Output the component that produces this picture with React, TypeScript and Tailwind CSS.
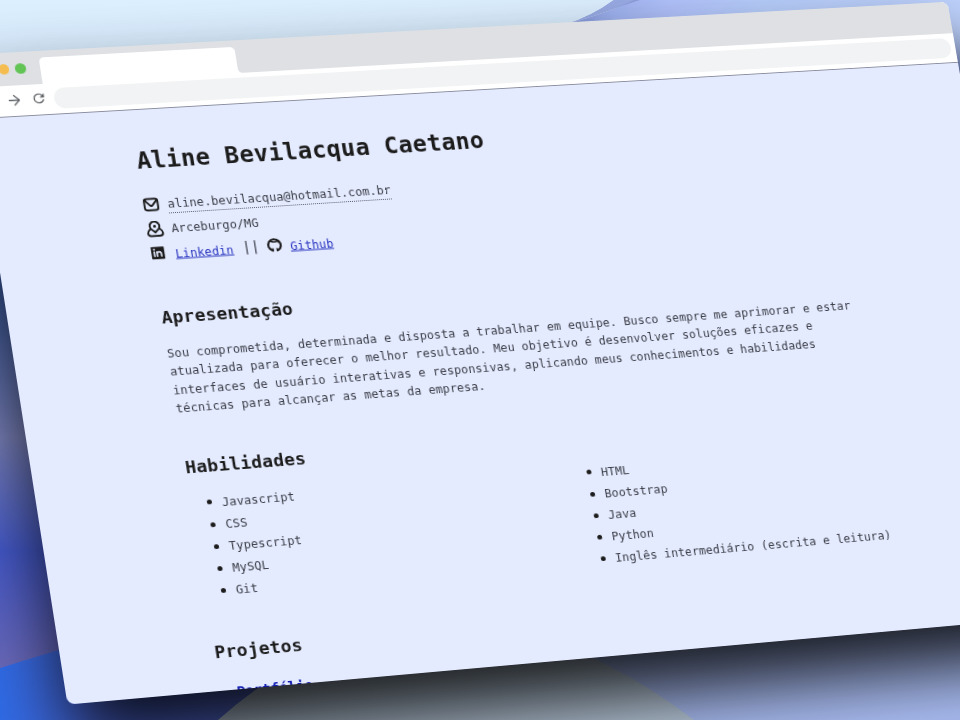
import React from "react";
import { ArrowRight } from "lucide-react";

const W = 1024;
const H = 680;
// Corners of the tilted window on the stage: TL, TR, BR, BL
const Q = [[-34, 54.8], [947.5, 1.8], [1053, 616.7], [67.5, 704.6]];

function perspective() {
  const [[x0, y0], [x1, y1], [x2, y2], [x3, y3]] = Q;
  const sx = x0 - x1 + x2 - x3;
  const sy = y0 - y1 + y2 - y3;
  const dx1 = x1 - x2, dx2 = x3 - x2, dy1 = y1 - y2, dy2 = y3 - y2;
  const det = dx1 * dy2 - dx2 * dy1;
  const g = (sx * dy2 - dx2 * sy) / det;
  const h = (dx1 * sy - sx * dy1) / det;
  const a = x1 - x0 + g * x1, b = x3 - x0 + h * x3;
  const d = y1 - y0 + g * y1, e = y3 - y0 + h * y3;
  const m = [a / W, d / W, 0, g / W, b / H, e / H, 0, h / H, 0, 0, 1, 0, x0, y0, 0, 1];
  return `matrix3d(${m.join(",")})`;
}

function Backdrop() {
  return (
    <svg className="absolute inset-0" width="960" height="720" viewBox="0 0 960 720">
      <defs>
        <linearGradient id="sky" x1="0" x2="0" y1="0" y2="1"><stop offset="0" stopColor="#dcefff" /><stop offset=".45" stopColor="#d5e8f9" /><stop offset="1" stopColor="#c8dcf2" /></linearGradient>
        <linearGradient id="right" x1="0" x2="1"><stop offset="0" stopColor="#7f92d4" /><stop offset=".12" stopColor="#9fb2ef" /><stop offset=".26" stopColor="#b0c1fb" /><stop offset=".5" stopColor="#b8cffd" /><stop offset="1" stopColor="#c0d4ff" /></linearGradient>
        <linearGradient id="edge" x1="0" x2="0" y1="0" y2="1"><stop offset="0" stopColor="#c0d4ff" stopOpacity="0" /><stop offset="1" stopColor="#4a60b0" /></linearGradient>
        <linearGradient id="left" x1="0" y1="0" x2="0" y2="1"><stop offset="0" stopColor="#3b5fb0" /><stop offset=".3" stopColor="#3f5fa8" /><stop offset=".57" stopColor="#8088c4" /><stop offset=".78" stopColor="#4459cc" /><stop offset="1" stopColor="#6a68b8" /></linearGradient>
        <linearGradient id="low" x1="0" y1="0" x2="1" y2="0"><stop offset="0" stopColor="#2f6ae6" /><stop offset=".3" stopColor="#4a66d8" /><stop offset="1" stopColor="#5868c4" /></linearGradient>
      </defs>
      <rect width="960" height="720" fill="#a9bcf2" />
      <rect width="960" height="130" fill="url(#sky)" />
      <path d="M567 24Q610 12 634 0H960V300H567Z" fill="url(#right)" />
      <path d="M567 24Q592 16 614 0H640Z" fill="#8c9edb" />
      <path d="M567 24Q592 16 614 0H634Q610 12 567 24Z" fill="#98aae4" />
      <path d="M940 20H960V90H940Z" fill="url(#edge)" />
      <rect y="130" width="300" height="540" fill="url(#left)" />
      <path d="M0 668Q60 650 120 630H340V720H0Z" fill="url(#low)" />
      <path d="M218 720Q330 620 470 620Q590 640 694 720Z" fill="#b6c6d8" />
    </svg>
  );
}

function BrowserChrome() {
  return (
    <header className="h-[68px] shrink-0 border-b border-[#8b8fa0] bg-white">
      <div className="flex h-[35px] items-center bg-[#dee0e4] pl-[13px]">
        <div className="flex w-[58px] gap-[6px]">
          <i className="size-[10.5px] rounded-full bg-[#ee6a5f]" />
          <i className="size-[10.5px] rounded-full bg-[#f5bd4f]" />
          <i className="size-[10.5px] rounded-full bg-[#61c454]" />
        </div>
        <div className="h-[28.5px] w-[197px] self-end rounded-t-[5px] bg-white" />
        <svg className="self-end" width="5" height="5" viewBox="0 0 5 5"><path d="M0 0Q0 5 5 5H0Z" fill="#fff" /></svg>
      </div>
      <div className="flex h-[32px] items-center pl-[32px] pr-[5px] text-[#606367]">
        <ArrowRight className="-mt-[2px]" size={17} strokeWidth={1.8} />
        <svg className="-mt-[2px] ml-[8px]" width="16" height="16" viewBox="0 0 24 24" fill="currentColor">
          <path d="M17.65 6.35A7.95 7.95 0 0 0 12 4a8 8 0 1 0 7.73 10h-2.08A6 6 0 1 1 12 6c1.66 0 3.14.69 4.22 1.78L13 11h7V4z" />
        </svg>
        <div className="ml-[7px] h-[22px] flex-1 rounded-full bg-[#f1f3f4]" />
      </div>
    </header>
  );
}

function Glyph({ children }: { children: React.ReactNode }) {
  return (
    <svg className="mr-[8px] text-[#1c1c1c]" width="17" height="17" viewBox="0 0 24 24" fill="none" stroke="currentColor" strokeWidth="2.7" strokeLinecap="round" strokeLinejoin="round">
      {children}
    </svg>
  );
}

function SkillList({ items }: { items: string[] }) {
  return (
    <ul className="w-[389px] pl-[15.5px]">
      {items.map((s) => (
        <li key={s} className="flex h-[23.1px] items-center whitespace-nowrap">
          <i className="mr-[10.5px] size-[5px] rounded-full bg-[#1c1c1c]" />
          <span className="translate-y-px">{s}</span>
        </li>
      ))}
    </ul>
  );
}

export default function App() {
  return (
    <div className="relative h-[720px] w-[960px] overflow-hidden">
      <Backdrop />
      <div
        className="absolute left-0 top-0 h-[680px] w-[1024px] origin-top-left rounded-[8px] shadow-[0_45px_75px_-2px_rgba(0,0,0,0.87)]"
        style={{ transform: perspective() }}
      >
        <div className="flex h-full flex-col overflow-hidden rounded-[8px] bg-[#e5ebff] font-['DejaVu_Sans_Mono',monospace] text-[12px] tracking-[0.009em] text-[#3a3d46]">
          <BrowserChrome />
          <main className="pl-[152px] pt-[40px]">
            <h1 className="h-[47px] text-[24px] font-bold leading-[28px] tracking-[0.015em] text-[#1c1c1c]">Aline Bevilacqua Caetano</h1>
            <div className="-ml-px flex h-[26px] items-center">
              <Glyph><rect x="2.5" y="3.5" width="19" height="17" rx="3.5" /><path d="M3.5 5.5 10 13q2 2 4 0l6.500-7.500" /></Glyph>
              <span className="translate-y-[2px] border-b-[1.5px] border-dotted border-[#55586a] leading-[17px]">aline.bevilacqua@hotmail.com.br</span>
            </div>
            <div className="-ml-px flex h-[26px] items-center">
              <Glyph><path d="M12 17 7.300 12.500a6.800 6.800 0 1 1 9.400 0z" /><path d="M5.500 11.500Q1.500 15 1.500 18q0 4.200 4.500 4.200h12q4.500 0 4.500-4.200 0-3-4-6.500" /><path d="M12 7.800v.2" strokeWidth="4" /></Glyph>
              <span className="translate-y-px">Arceburgo/MG</span>
            </div>
            <div className="-ml-px flex h-[26px] items-center">
              <svg className="-ml-px mr-[9px] -translate-y-px" width="17" height="17" viewBox="0 0 24 24">
                <rect x="3" y="3" width="18.500" height="18.500" rx="1" fill="#1c1c1c" />
                <path d="M7.300 10v8M11 18v-8M11 14q0-3.200 3-3.200t3 3.200v4" fill="none" stroke="#e5ebff" strokeWidth="2.300" />
                <circle cx="7.300" cy="7" r="1.500" fill="#e5ebff" />
              </svg>
              <a className="translate-y-[1.5px] text-[#2a36c0] underline">Linkedin</a>
              <span className="ml-[9px] text-[14.4px]">||</span>
              <svg className="mx-[7px] -translate-y-px" width="17" height="17" viewBox="0 0 24 24" fill="none" stroke="#1c1c1c" strokeLinejoin="round">
                <path d="M8.300 20.300A9 9 0 1 1 15.700 20.300" strokeWidth="3" />
                <path d="M6 5.500 10 7H14L18 5.500 18.500 9" strokeWidth="2.200" />
                <path d="M9 16.500v5M15 16.500v5" strokeWidth="2.200" />
                <path d="M4.500 16Q6 16.500 7 18.500L9 18.500" strokeWidth="1.500" />
              </svg>
              <a className="translate-y-[1.5px] text-[#2a36c0] underline">Github</a>
            </div>
            <h2 className="mt-[45px] h-[39px] text-[18px] font-bold leading-[20px] tracking-[0.012em] text-[#1c1c1c]">Apresentação</h2>
            <p className="w-[740px] whitespace-pre text-[12px] leading-[19.35px]">{`Sou comprometida, determinada e disposta a trabalhar em equipe. Busco sempre me aprimorar e estar
atualizada para oferecer o melhor resultado. Meu objetivo é desenvolver soluções eficazes e
interfaces de usuário interativas e responsivas, aplicando meus conhecimentos e habilidades
técnicas para alcançar as metas da empresa.`}</p>
            <h2 className="mt-[42px] h-[36px] text-[18px] font-bold leading-[20px] tracking-[0.012em] text-[#1c1c1c]">Habilidades</h2>
            <div className="flex">
              <SkillList items={["Javascript", "CSS", "Typescript", "MySQL", "Git"]} />
              <SkillList items={["HTML", "Bootstrap", "Java", "Python", "Inglês intermediário (escrita e leitura)"]} />
            </div>
            <h2 className="mt-[42.5px] h-[42px] text-[18px] font-bold leading-[20px] tracking-[0.012em] text-[#1c1c1c]">Projetos</h2>
            <h3 className="pl-[16px] text-[14px] font-bold leading-[20px] text-[#0d19b0]">Portfólio</h3>
          </main>
        </div>
      </div>
    </div>
  );
}
